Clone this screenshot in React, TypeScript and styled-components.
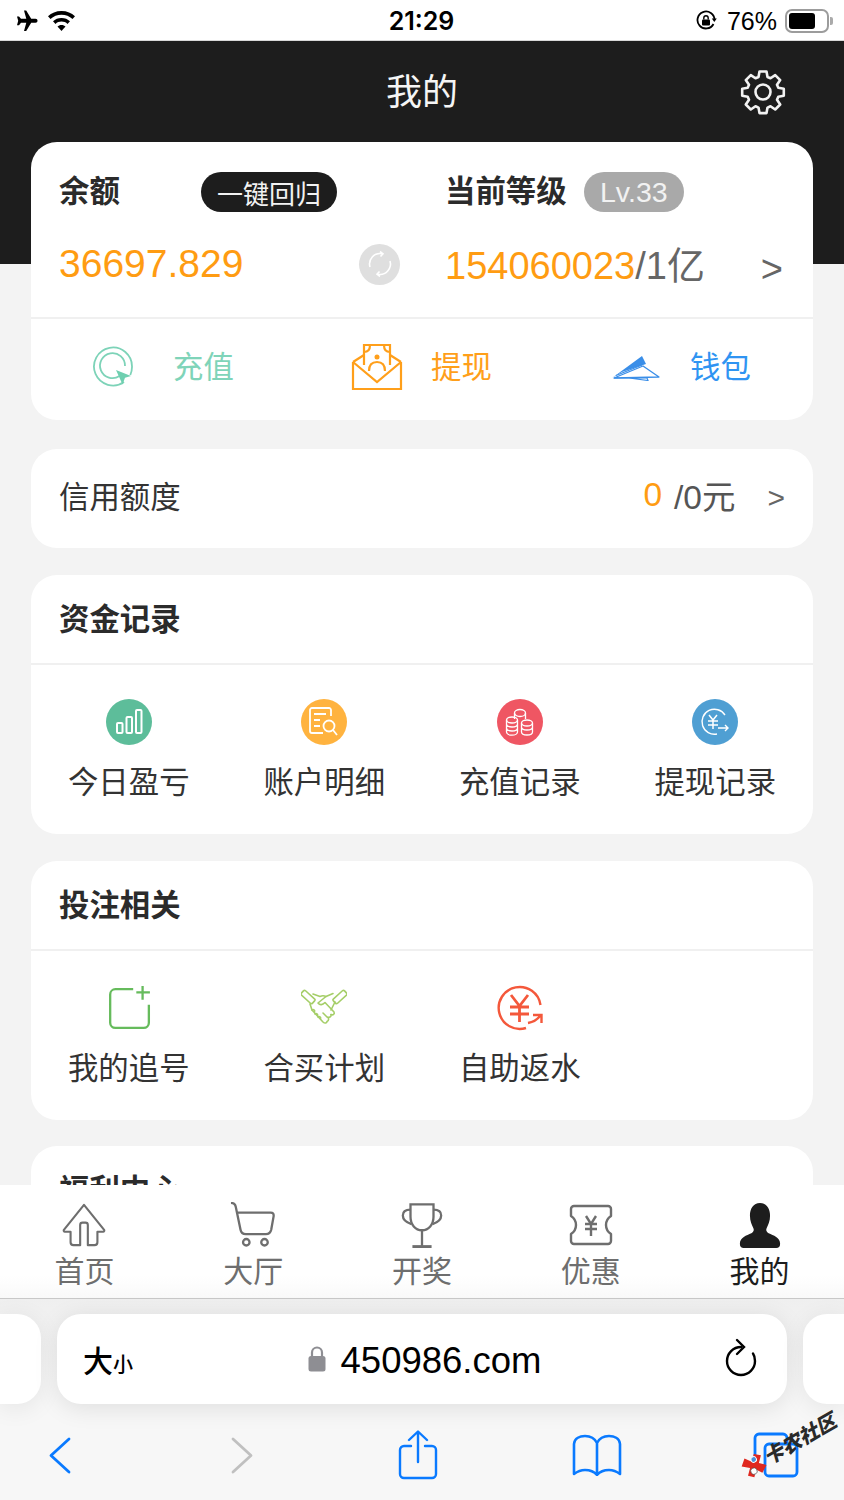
import React from "react";
import styled, { createGlobalStyle } from "styled-components";

const GlobalStyle = createGlobalStyle`
  html, body {
    margin: 0;
    padding: 0;
    background: #f3f3f3;
    font-family: "Liberation Sans", "Noto Sans CJK SC", sans-serif;
  }
  * { box-sizing: border-box; }
`;

// Icons
const Plane = () => (
  <svg width="24" height="24" viewBox="0 0 24 24">
    <path d="M10 1.500h2.200l5 8.300h4.300c1.300 0 2 .9 2 2s-.7 2-2 2h-4.300l-5 8.300H10l2.300-8.300H7l-2 2.400H3l1.200-4.400L3 7.500h2l2 2.300h5.300z" fill="#000" />
  </svg>
);
const Wifi = () => (
  <svg width="31" height="24" viewBox="0 0 30 24">
    <path d="M15 2C9.500 2 5 4 1.500 7.300L4 10c3-2.800 6.800-4.300 11-4.300S23 7.200 26 10l2.500-2.700C25 4 20.500 2 15 2z" fill="#000" />
    <path d="M15 9c-3.400 0-6.300 1.200-8.500 3.300l2.500 2.600c1.600-1.500 3.700-2.300 6-2.300s4.400.8 6 2.300l2.500-2.600C21.300 10.200 18.400 9 15 9z" fill="#000" />
    <path d="M15 16c-1.700 0-3 .6-4 1.500l4 4.500 4-4.500c-1-.9-2.300-1.500-4-1.500z" fill="#000" />
  </svg>
);
const RotationLock = () => (
  <svg width="22" height="22" viewBox="0 0 22 22">
    <path d="M18.500 14A8.500 8.500 0 1 1 19.500 10" fill="none" stroke="#000" strokeWidth="1.800" />
    <path d="M16.800 8.500h5l-2.500 3.500z" fill="#000" />
    <rect x="7" y="9.500" width="8" height="6" rx="1" fill="#000" />
    <path d="M8.800 9.500V8a2.200 2.200 0 0 1 4.400 0v1.500" fill="none" stroke="#000" strokeWidth="1.400" />
  </svg>
);
const Gear = () => (
  <svg width="46" height="46" viewBox="0 0 46 46" fill="none" stroke="#f2f2f2" strokeWidth="2.600" strokeLinejoin="round">
    <path d="M19.500 2.500h7l1 5.500 3 1.300 4.700-3.200 5 5-3.200 4.700 1.300 3 5.500 1v7l-5.500 1-1.300 3 3.200 4.700-5 5-4.700-3.200-3 1.300-1 5.500h-7l-1-5.500-3-1.300-4.700 3.200-5-5 3.200-4.700-1.300-3-5.500-1v-7l5.500-1 1.300-3-3.200-4.700 5-5 4.700 3.200 3-1.300z" />
    <circle cx="23" cy="23" r="7.500" />
  </svg>
);
const Refresh = () => (
  <svg width="26" height="26" viewBox="0 0 26 26" fill="none" stroke="#fff" strokeWidth="1.600">
    <path d="M3 16A10.500 10.500 0 0 1 15 2.700" />
    <path d="M13 .5l3 2.300-2.500 2.700" />
    <path d="M23 10A10.500 10.500 0 0 1 11 23.300" />
    <path d="M13 25.500l-3-2.300 2.500-2.700" />
  </svg>
);
const RechargeIcon = () => (
  <svg width="44" height="44" viewBox="0 0 44 44" fill="none" stroke="#7dd3b8" strokeWidth="1.800">
    <path d="M33 37A19 19 0 1 1 41 22c0 3-.6 5.500-1.700 8" />
    <path d="M28.500 31A12.500 12.500 0 1 1 34 21" />
    <path d="M25 25l15 6-6 1.800-2.500 6.700z" fill="#6fcfb0" stroke="none" />
  </svg>
);
const WithdrawIcon = () => (
  <svg width="52" height="48" viewBox="0 0 52 48" fill="none" stroke="#ff9f1a" strokeWidth="2.200">
    <path d="M2 19v27h48V19" strokeLinejoin="miter" />
    <path d="M2 19l24 20 24-20" />
    <path d="M2 19l11-7M50 19l-11-7" />
    <path d="M13 22V2h26v20" />
    <path d="M13 9c4 0 6-3 6-7M39 9c-4 0-6-3-6-7" />
    <circle cx="26" cy="14" r="2.500" fill="#ff9f1a" stroke="none" />
    <path d="M18 28c0-6 3-9 8-9s8 3 8 9" />
  </svg>
);
const WalletIcon = () => (
  <svg width="50" height="28" viewBox="0 0 50 28">
    <path d="M1 25L31 3l4 8-24 8z" fill="#3a8ee8" />
    <path d="M3 25l29-12 16 11z" fill="#fff" stroke="#3a8ee8" strokeWidth="1.300" strokeLinejoin="round" />
    <path d="M3 25h33l1 2.500L18 25" fill="none" stroke="#3a8ee8" strokeWidth="1.200" />
    <path d="M5 22.500L31 12" stroke="#3a8ee8" strokeWidth="1.200" />
  </svg>
);
const BarsGlyph = () => (
  <svg width="28" height="28" viewBox="0 0 28 28" fill="none" stroke="#fff" strokeWidth="2">
    <rect x="2" y="15" width="5.500" height="10" rx="1" />
    <rect x="11.500" y="9" width="5.500" height="16" rx="1" />
    <rect x="21" y="2" width="5.500" height="23" rx="1" />
  </svg>
);
const LedgerGlyph = () => (
  <svg width="30" height="30" viewBox="0 0 30 30" fill="none" stroke="#fff" strokeWidth="1.800">
    <path d="M22 9V3a2 2 0 0 0-2-2H3a2 2 0 0 0-2 2v21a2 2 0 0 0 2 2h11" />
    <path d="M5 7h12M5 13h6M5 19h6" />
    <circle cx="20" cy="19" r="5.500" />
    <path d="M24 23l4 5" />
  </svg>
);
const CoinsGlyph = () => (
  <svg width="30" height="30" viewBox="0 0 30 30" fill="none" stroke="#fff" strokeWidth="1.300">
    <ellipse cx="15" cy="6" rx="5.500" ry="3.500" />
    <path d="M9.500 6v6M20.500 6v6" />
    <ellipse cx="7" cy="13" rx="5.500" ry="3" />
    <path d="M1.500 13v12c0 1.800 2.500 3.200 5.500 3.200s5.500-1.400 5.500-3.200V13M1.500 17c0 1.800 2.500 3 5.500 3s5.500-1.200 5.500-3M1.500 21c0 1.800 2.500 3 5.500 3s5.500-1.200 5.500-3" />
    <ellipse cx="22" cy="16" rx="5.500" ry="3" />
    <path d="M16.500 16v9c0 1.800 2.500 3 5.500 3s5.500-1.200 5.500-3v-9M16.500 20c0 1.800 2.500 3 5.500 3s5.500-1.200 5.500-3" />
  </svg>
);
const TransferGlyph = () => (
  <svg width="30" height="30" viewBox="0 0 30 30" fill="none" stroke="#fff" strokeWidth="1.400">
    <path d="M25 8A12.500 12.500 0 1 0 17 27" />
    <path d="M9 8l4 5 4-5M8 14h10M8 18h10M13 13v9" strokeWidth="1.500" />
    <path d="M18 21h10M25 18l3 3-3 3" />
  </svg>
);
const ChaseIcon = () => (
  <svg width="46" height="46" viewBox="0 0 44 44" fill="none" stroke="#66bb5c" strokeWidth="2.200">
    <path d="M26 4H9a5 5 0 0 0-5 5v27a5 5 0 0 0 5 5h27a5 5 0 0 0 5-5V19" />
    <path d="M35 1v13M29 7h13" />
  </svg>
);
const ShakeIcon = () => (
  <svg width="46" height="38" viewBox="0 0 46 38" fill="none" stroke="#a5ce68" strokeWidth="1.600" strokeLinejoin="round" strokeLinecap="round">
    <rect x="-3" y="-7.500" width="6" height="15" rx="1.500" transform="translate(7 8) rotate(-48)" />
    <rect x="-3" y="-7.500" width="6" height="15" rx="1.500" transform="translate(39 8) rotate(48)" />
    <path d="M12 5l7 2.500c2-1 4-1 6 0l7-3M34 13l-4 8" />
    <path d="M25 7.500L17 14c2 2.500 4.500 2 7-.5l9 9.500c1 2-1 3.500-3 2.500" />
    <path d="M9 15l2 6 11 12c2 1.800 4 1 4-.5M30 25.500c.5 2.500-2 3.500-4 2.500l-4-4M26 32.500c1-.5 2-1 1.500-3" />
    <path d="M11 21c1.500-1 3 0 2.500 1.500M14 25c1.500-1 3 0 2.500 1.500M17 28c1.500-1 3 0 2.500 1.500" />
  </svg>
);
const RebateIcon = () => (
  <svg width="48" height="46" viewBox="0 0 48 46" fill="none" stroke="#f4583b" strokeWidth="2.400">
    <path d="M44.500 20A21 21 0 1 0 30 43" />
    <path d="M15 10l8.500 11L32 10M14 22h19M14 29h19M23.500 21v16" strokeWidth="2.800" />
    <path d="M32 38c5-1 9-3 12-7M37 30h8.500v8" />
  </svg>
);
const HomeIcon = () => (
  <svg width="48" height="48" viewBox="0 0 48 48" fill="none" stroke="#6e6e6e" strokeWidth="2.200">
    <path d="M24 3L3 29c-.500 1 0 2 1 2h6v11a3 3 0 0 0 3 3h7V24c0-1.500 1-2.500 2.500-2.500h3c1.500 0 2.500 1 2.500 2.500v21h7a3 3 0 0 0 3-3V31h6c1 0 1.500-1 1-2z" strokeLinejoin="round" />
  </svg>
);
const CartIcon = () => (
  <svg width="50" height="48" viewBox="0 0 50 48" fill="none" stroke="#6e6e6e" strokeWidth="2.400">
    <path d="M2 1c3 0 4.500 1.500 5 4l5 24c.5 3 2.500 4.500 5.500 4.500h21c3 0 4.800-1.500 5.500-4.500l2.500-14c.4-2.500-.8-4-3-4H8" strokeLinejoin="round" />
    <circle cx="18" cy="42" r="3.400" />
    <circle cx="37" cy="42" r="3.400" />
  </svg>
);
const TrophyIcon = () => (
  <svg width="46" height="48" viewBox="0 0 46 48" fill="none" stroke="#6e6e6e" strokeWidth="2.400">
    <path d="M11 2.500h24v13c0 8-5 14-12 14s-12-6-12-14z" />
    <path d="M11 8c-5 0-8 2-8 6 0 4 3 7 9 9M35 8c5 0 8 2 8 6 0 4-3 7-9 9" />
    <path d="M23 29v17" />
    <path d="M13 46.500h20" strokeWidth="3" />
  </svg>
);
const CouponIcon = () => (
  <svg width="46" height="46" viewBox="0 0 46 46" fill="none" stroke="#6e6e6e" strokeWidth="2.400">
    <path d="M3 7a3 3 0 0 1 3-3h34a3 3 0 0 1 3 3v7c-3 2-5 5-5 9s2 7 5 9v7a3 3 0 0 1-3 3H6a3 3 0 0 1-3-3v-7c3-2 5-5 5-9s-2-7-5-9z" strokeLinejoin="round" />
    <path d="M18 14l5 8 5-8M17 22h12M17 27h12M23 22v12" />
  </svg>
);
const PersonIcon = () => (
  <svg width="48" height="48" viewBox="0 0 46 48">
    <path d="M23 1c7 0 10.500 6 10.500 13 0 6-2 10-3.500 13-1 2-.5 4 2 5.500 5 2.500 12 4 12 11 0 3-1.500 4.500-4 4.500H6c-2.500 0-4-1.500-4-4.500 0-7 7-8.500 12-11 2.500-1.500 3-3.500 2-5.500-1.500-3-3.500-7-3.500-13C12.500 7 16 1 23 1z" fill="#1d1d1d" />
  </svg>
);
const LockIcon = () => (
  <svg width="20" height="28" viewBox="0 0 18 28">
    <path d="M4 13V7.500a5 5 0 0 1 10 0V13" fill="none" stroke="#8e8e93" strokeWidth="2.200" />
    <rect x="0.500" y="11" width="17" height="15.500" rx="2.500" fill="#8e8e93" />
  </svg>
);
const ReloadIcon = () => (
  <svg width="34" height="40" viewBox="0 0 34 40" fill="none" stroke="#000" strokeWidth="2.400" strokeLinecap="round">
    <path d="M16 9A14 14 0 1 0 30 23c0-3-.6-5.500-2-7.500" />
    <path d="M12 2l7 7-7 7" />
  </svg>
);
const BackIcon = ({ color }: { color: string }) => (
  <svg width="22" height="37" viewBox="0 0 22 37" fill="none" stroke={color} strokeWidth="2.800" strokeLinecap="round" strokeLinejoin="round">
    <path d="M20 2L2 18.500 20 35" />
  </svg>
);
const ForwardIcon = ({ color }: { color: string }) => (
  <svg width="22" height="37" viewBox="0 0 22 37" fill="none" stroke={color} strokeWidth="2.800" strokeLinecap="round" strokeLinejoin="round">
    <path d="M2 2l18 16.500L2 35" />
  </svg>
);
const ShareIcon = () => (
  <svg width="40" height="50" viewBox="0 0 40 50" fill="none" stroke="#0a7aff" strokeWidth="2.400" strokeLinecap="round" strokeLinejoin="round">
    <path d="M20 32V2M11 10l9-8.500 9 8.500" />
    <path d="M13 16H6a4 4 0 0 0-4 4v24a4 4 0 0 0 4 4h28a4 4 0 0 0 4-4V20a4 4 0 0 0-4-4h-7" />
  </svg>
);
const BookIcon = () => (
  <svg width="50" height="42" viewBox="0 0 50 42" fill="none" stroke="#0a7aff" strokeWidth="2.600" strokeLinejoin="round">
    <path d="M25 9c-2-4-6-7-12-7C8 2 2.500 4 2 10v30c4-3 7-4 11-4 5 0 9 1.500 12 5 3-3.500 7-5 12-5 4 0 7 1 11 4V10c-.5-6-6-8-11-8-6 0-10 3-12 7zM25 9v32" />
  </svg>
);
const TabsIcon = () => (
  <svg width="46" height="46" viewBox="0 0 46 46" fill="none" stroke="#0a7aff" strokeWidth="2.800">
    <path d="M11 34H6a4 4 0 0 1-4-4V6a4 4 0 0 1 4-4h24a4 4 0 0 1 4 4v5" />
    <rect x="12" y="12" width="32" height="32" rx="4" />
  </svg>
);
const WatermarkBadge = () => (
  <svg width="26" height="26" viewBox="0 0 28 28">
    <path d="M2 9l7-6 5 7 6-6 6 5-6 6 6 6-8 5-4-6-6 6-5-5 6-6z" fill="#e0281f" />
    <circle cx="11" cy="20" r="3.500" fill="#fff" stroke="#333" strokeWidth=".6" />
    <circle cx="17" cy="9" r="3" fill="#4a90d9" stroke="#fff" strokeWidth="1" />
  </svg>
);

// Layout
const Screen = styled.div`
  width: 844px;
  height: 1500px;
  display: flex;
  flex-direction: column;
  overflow: hidden;
  background: #f3f3f3;
`;

const StatusBar = styled.div`
  height: 41px;
  flex: none;
  padding: 2px 15px 0 14px;
  background: #fff;
  border-bottom: 1px solid #d8d8d8;
  display: grid;
  grid-template-columns: 1fr auto 1fr;
  align-items: center;
  color: #000;
`;

const StatusLeft = styled.div`
  display: flex;
  align-items: center;
  gap: 8px;
`;

const StatusTime = styled.div`
  font-family: Inter, "Liberation Sans", sans-serif;
  font-size: 25px;
  font-weight: 600;
`;

const StatusRight = styled.div`
  display: flex;
  align-items: center;
  justify-content: flex-end;
  font-size: 25px;
`;

const PercentText = styled.span`
  margin: 0 8px 0 10px;
`;

const Battery = styled.div`
  width: 44px;
  height: 24px;
  border: 2px solid #9c9c9c;
  border-radius: 7px;
  padding: 2px;
  position: relative;
  &::before {
    content: "";
    display: block;
    width: 72%;
    height: 100%;
    background: #000;
    border-radius: 3px;
  }
  &::after {
    content: "";
    position: absolute;
    right: -6px;
    top: 6px;
    width: 3px;
    height: 8px;
    background: #aaa;
    border-radius: 0 2px 2px 0;
  }
`;

const Scroll = styled.div`
  flex: 1;
  min-height: 0;
  overflow: hidden;
  background: #f3f3f3;
`;

const Header = styled.div`
  height: 223px;
  background: #1d1d1d;
  padding: 25px 58px 148px;
  display: grid;
  grid-template-columns: 46px 1fr 46px;
  align-items: center;
`;

const HeaderTitle = styled.div`
  text-align: center;
  color: #f5f5f5;
  font-size: 36px;
  line-height: 50px;
  padding-top: 2px;
`;

const Cards = styled.div`
  margin-top: -122px;
  padding: 0 31px;
  display: flex;
  flex-direction: column;
`;

const Card = styled.section<{ $mb?: number }>`
  background: #fff;
  border-radius: 26px;
  margin-bottom: ${(p) => p.$mb ?? 27}px;
  flex: none;
`;

const BalanceTop = styled.div`
  height: 177px;
  border-bottom: 2px solid #f0f0f0;
  padding: 28px 28px 0 28px;
  display: grid;
  grid-template-columns: 386px 1fr;
  grid-template-rows: 44px auto;
  row-gap: 29px;
`;

const LabelRow = styled.div`
  display: flex;
  align-items: center;
`;

const BoldLabel = styled.div<{ $w?: number }>`
  font-size: 30.4px;
  font-weight: 700;
  color: #2b2b2b;
  width: ${(p) => (p.$w ? `${p.$w}px` : "auto")};
  line-height: 40px;
  padding-bottom: 2px;
`;

const Pill = styled.div<{ $bg: string; $size: number }>`
  height: 40px;
  padding: 0 16px;
  border-radius: 20px;
  background: ${(p) => p.$bg};
  color: #f2f2f2;
  font-size: ${(p) => p.$size}px;
  display: flex;
  align-items: center;
`;

const ValueRow = styled.div`
  display: flex;
  align-items: center;
  justify-content: space-between;
  height: 42px;
`;

const Amount = styled.div`
  color: #ff9c12;
  font-size: 39px;
  line-height: 42px;
`;

const RefreshBtn = styled.div`
  width: 41px;
  height: 41px;
  border-radius: 50%;
  background: #dfdfdf;
  display: flex;
  align-items: center;
  justify-content: center;
  margin-right: 45px;
`;

const LevelProgress = styled.div`
  font-size: 38px;
  line-height: 46px;
  color: #666;
  flex: 1;
  margin-top: 4px;
`;

const Orange = styled.span`
  color: #ff9c12;
`;

const LevelChevron = styled.span`
  color: #666;
  font-size: 38px;
  margin: 10px 2px 0 0;
`;

const CreditChevron = styled.span`
  color: #666;
  font-size: 30px;
  margin: 6px 0 0 20px;
`;

const QuickRow = styled.div`
  height: 101px;
  padding-bottom: 5px;
  display: grid;
  grid-template-columns: 294px 262px 1fr;
  align-items: center;
`;

const QuickItem = styled.div<{ $pl: number; $gap: number; $color: string }>`
  display: flex;
  align-items: center;
  padding-left: ${(p) => p.$pl}px;
  gap: ${(p) => p.$gap}px;
  color: ${(p) => p.$color};
  font-size: 30.4px;
`;

const QuickText = styled.span`
  padding-bottom: 5px;
`;

const CreditRow = styled.div`
  height: 99px;
  padding: 0 28px 8px;
  display: flex;
  align-items: center;
  justify-content: space-between;
  font-size: 30.4px;
  color: #333;
`;

const CreditValue = styled.div`
  display: flex;
  align-items: center;
  font-size: 33.500px;
  color: #555;
  gap: 12px;
`;

const CardTitle = styled.div`
  height: 90px;
  padding: 0 28px 5px;
  border-bottom: 2px solid #f0f0f0;
  display: flex;
  align-items: center;
  font-size: 30.4px;
  font-weight: 700;
  color: #2b2b2b;
`;

const ActionGrid = styled.div`
  height: 169px;
  padding: 34px 0 0 0;
  display: grid;
  grid-template-columns: repeat(4, 195.5px);
`;

const Action = styled.div`
  display: flex;
  flex-direction: column;
  align-items: center;
  color: #333;
  font-size: 30.4px;
`;

const ActionIcon = styled.div<{ $bg?: string }>`
  width: 46px;
  height: 46px;
  border-radius: 50%;
  background: ${(p) => p.$bg ?? "transparent"};
  display: flex;
  align-items: center;
  justify-content: center;
  margin-bottom: 13px;
  & > svg {
    flex: none;
  }
`;

const TabBar = styled.nav`
  height: 114px;
  flex: none;
  background: linear-gradient(#fff 80%, #f9f9f9);
  border-bottom: 1px solid #c8c8c8;
  display: grid;
  grid-template-columns: repeat(5, 1fr);
  padding-top: 17px;
`;

const Tab = styled.div<{ $active?: boolean }>`
  display: flex;
  flex-direction: column;
  align-items: center;
  font-size: 30px;
  line-height: 48px;
  color: ${(p) => (p.$active ? "#1d1d1d" : "#6e6e6e")};
  & > svg {
    height: 46px;
    flex: none;
  }
`;

const Safari = styled.div`
  height: 201px;
  flex: none;
  background: linear-gradient(#efefef, #f7f7f7 40%);
  position: relative;
`;

const UrlRow = styled.div`
  height: 90px;
  display: grid;
  grid-template-columns: 41px 730px 41px;
  justify-content: space-between;
  position: relative;
  top: 15px;
`;

const UrlGhost = styled.div<{ $side: "l" | "r" }>`
  background: #fff;
  border-radius: ${(p) => (p.$side === "l" ? "0 24px 24px 0" : "24px 0 0 24px")};
  box-shadow: 0 4px 24px rgba(0, 0, 0, 0.08);
`;

const UrlField = styled.div`
  background: #fff;
  border-radius: 24px;
  box-shadow: 0 4px 24px rgba(0, 0, 0, 0.1);
  padding: 0 28px 0 26px;
  display: grid;
  grid-template-columns: 1fr auto 1fr;
  align-items: center;
`;

const AaLabel = styled.div`
  font-size: 30px;
  font-weight: 500;
  color: #000;
  & > small {
    font-size: 20px;
  }
`;

const Domain = styled.div`
  display: flex;
  align-items: center;
  gap: 14px;
  font-size: 36.5px;
  color: #000;
  margin-left: 6px;
`;

const DomainText = styled.span`
  padding-top: 4px;
`;

const ReloadWrap = styled.div`
  display: flex;
  justify-content: flex-end;
  padding-bottom: 3px;
`;

const SafariTools = styled.div`
  margin: 36px 0 0 -30px;
  height: 60px;
  display: flex;
`;

const ToolSlot = styled.div<{ $nudge?: number }>`
  width: 179px;
  flex: none;
  display: flex;
  align-items: center;
  justify-content: center;
  padding-left: ${(p) => p.$nudge ?? 0}px;
`;

const Watermark = styled.div`
  position: absolute;
  right: 3px;
  bottom: 41px;
  display: flex;
  align-items: center;
  transform: rotate(-30deg);
  font-size: 20px;
  font-weight: 900;
  font-style: italic;
  color: #2a2a2a;
  white-space: nowrap;
`;

const funds = [
  { label: "今日盈亏", bg: "#5dbd9a", icon: <BarsGlyph /> },
  { label: "账户明细", bg: "#ffb33f", icon: <LedgerGlyph /> },
  { label: "充值记录", bg: "#ef5663", icon: <CoinsGlyph /> },
  { label: "提现记录", bg: "#4f9fd3", icon: <TransferGlyph /> },
];

const bets = [
  { label: "我的追号", icon: <ChaseIcon /> },
  { label: "合买计划", icon: <ShakeIcon /> },
  { label: "自助返水", icon: <RebateIcon /> },
];

const tabs = [
  { label: "首页", icon: <HomeIcon /> },
  { label: "大厅", icon: <CartIcon /> },
  { label: "开奖", icon: <TrophyIcon /> },
  { label: "优惠", icon: <CouponIcon /> },
  { label: "我的", icon: <PersonIcon />, active: true },
];

export default function App() {
  return (
    <Screen>
      <GlobalStyle />
      <StatusBar>
        <StatusLeft>
          <Plane />
          <Wifi />
        </StatusLeft>
        <StatusTime>21:29</StatusTime>
        <StatusRight>
          <RotationLock />
          <PercentText>76%</PercentText>
          <Battery />
        </StatusRight>
      </StatusBar>

      <Scroll>
        <Header>
          <span />
          <HeaderTitle>我的</HeaderTitle>
          <Gear />
        </Header>
        <Cards>
          <Card $mb={29}>
            <BalanceTop>
              <LabelRow>
                <BoldLabel $w={142}>余额</BoldLabel>
                <Pill $bg="#1d1d1d" $size={26}>一键回归</Pill>
              </LabelRow>
              <LabelRow>
                <BoldLabel $w={139}>当前等级</BoldLabel>
                <Pill $bg="#a9a9a9" $size={28.5}>Lv.33</Pill>
              </LabelRow>
              <ValueRow>
                <Amount>36697.829</Amount>
                <RefreshBtn>
                  <Refresh />
                </RefreshBtn>
              </ValueRow>
              <ValueRow>
                <LevelProgress>
                  <Orange>154060023</Orange>/1亿
                </LevelProgress>
                <LevelChevron>&gt;</LevelChevron>
              </ValueRow>
            </BalanceTop>
            <QuickRow>
              <QuickItem $pl={60} $gap={38} $color="#7fd4b9">
                <RechargeIcon />
                <QuickText>充值</QuickText>
              </QuickItem>
              <QuickItem $pl={26} $gap={28} $color="#ff9f1a">
                <WithdrawIcon />
                <QuickText>提现</QuickText>
              </QuickItem>
              <QuickItem $pl={24} $gap={29} $color="#2f94f2">
                <WalletIcon />
                <QuickText>钱包</QuickText>
              </QuickItem>
            </QuickRow>
          </Card>

          <Card>
            <CreditRow>
              信用额度
              <CreditValue>
                <Orange>0</Orange>/0元
                <CreditChevron>&gt;</CreditChevron>
              </CreditValue>
            </CreditRow>
          </Card>

          <Card>
            <CardTitle>资金记录</CardTitle>
            <ActionGrid>
              {funds.map((f) => (
                <Action key={f.label}>
                  <ActionIcon $bg={f.bg}>{f.icon}</ActionIcon>
                  {f.label}
                </Action>
              ))}
            </ActionGrid>
          </Card>

          <Card $mb={26}>
            <CardTitle>投注相关</CardTitle>
            <ActionGrid>
              {bets.map((b) => (
                <Action key={b.label}>
                  <ActionIcon>{b.icon}</ActionIcon>
                  {b.label}
                </Action>
              ))}
            </ActionGrid>
          </Card>

          <Card>
            <CardTitle>福利中心</CardTitle>
          </Card>
        </Cards>
      </Scroll>

      <TabBar>
        {tabs.map((t) => (
          <Tab key={t.label} $active={t.active}>
            {t.icon}
            {t.label}
          </Tab>
        ))}
      </TabBar>

      <Safari>
        <UrlRow>
          <UrlGhost $side="l" />
          <UrlField>
            <AaLabel>
              大<small>小</small>
            </AaLabel>
            <Domain>
              <LockIcon />
              <DomainText>450986.com</DomainText>
            </Domain>
            <ReloadWrap>
              <ReloadIcon />
            </ReloadWrap>
          </UrlField>
          <UrlGhost $side="r" />
        </UrlRow>
        <SafariTools>
          <ToolSlot>
            <BackIcon color="#0a7aff" />
          </ToolSlot>
          <ToolSlot $nudge={7}>
            <ForwardIcon color="#c0c0c0" />
          </ToolSlot>
          <ToolSlot>
            <ShareIcon />
          </ToolSlot>
          <ToolSlot>
            <BookIcon />
          </ToolSlot>
          <ToolSlot>
            <TabsIcon />
          </ToolSlot>
        </SafariTools>
        <Watermark>
          <WatermarkBadge />
          卡农社区
        </Watermark>
      </Safari>
    </Screen>
  );
}
